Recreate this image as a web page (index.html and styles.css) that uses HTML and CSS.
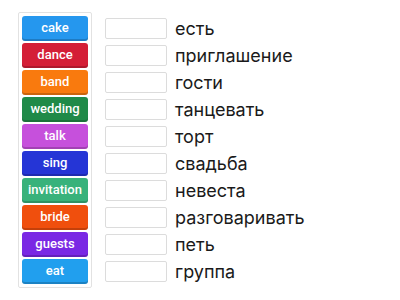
FILE: index.html
```html
<!DOCTYPE html>
<html lang="ru">
<head>
<meta charset="utf-8">
<link rel="stylesheet" href="styles.css">
</head>
<body>
<div class="game">
  <div class="bank">
    <div class="tile t-blue">cake</div>
    <div class="tile t-red">dance</div>
    <div class="tile t-orange">band</div>
    <div class="tile t-green">wedding</div>
    <div class="tile t-pink">talk</div>
    <div class="tile t-navy">sing</div>
    <div class="tile t-teal">invitation</div>
    <div class="tile t-redorange">bride</div>
    <div class="tile t-violet">guests</div>
    <div class="tile t-sky">eat</div>
  </div>
  <div class="rows">
    <div class="row"><span class="slot"></span><span class="word">есть</span></div>
    <div class="row"><span class="slot"></span><span class="word">приглашение</span></div>
    <div class="row"><span class="slot"></span><span class="word">гости</span></div>
    <div class="row"><span class="slot"></span><span class="word">танцевать</span></div>
    <div class="row"><span class="slot"></span><span class="word">торт</span></div>
    <div class="row"><span class="slot"></span><span class="word">свадьба</span></div>
    <div class="row"><span class="slot"></span><span class="word">невеста</span></div>
    <div class="row"><span class="slot"></span><span class="word">разговаривать</span></div>
    <div class="row"><span class="slot"></span><span class="word">петь</span></div>
    <div class="row"><span class="slot"></span><span class="word">группа</span></div>
  </div>
</div>
</body>
</html>
```
FILE: styles.css
```css
html, body {
  margin: 0;
  padding: 0;
  background: #ffffff;
}
.game {
  display: flex;
  align-items: flex-start;
  padding: 12px 0 0 18px;
  gap: 13px;
}
.bank {
  display: flex;
  flex-direction: column;
  gap: 2px;
  padding: 3px;
  border: 1px solid #e2e2e2;
  border-radius: 2px;
}
.tile {
  width: 66px;
  height: 25px;
  box-sizing: border-box;
  border-radius: 3px;
  color: #ffffff;
  font-family: Roboto, "Open Sans", sans-serif;
  font-size: 13px;
  font-weight: 500;
  line-height: 24px;
  text-align: center;
  box-shadow: inset 0 -2px 0 rgba(0, 0, 0, 0.18);
}
.t-blue { background: #2597ee; }
.t-red { background: #d41e37; }
.t-orange { background: #f97a0e; }
.t-green { background: #208a48; }
.t-pink { background: #c650dc; }
.t-navy { background: #2535d6; }
.t-teal { background: #38b27b; }
.t-redorange { background: #f04f0d; }
.t-violet { background: #7a28e4; }
.t-sky { background: #219fee; }
.rows {
  display: flex;
  flex-direction: column;
  gap: 2px;
  padding-top: 4px;
}
.row {
  display: flex;
  align-items: center;
  height: 25px;
  gap: 8px;
}
.slot {
  width: 62px;
  height: 21px;
  box-sizing: border-box;
  border: 1px solid #dcdcdc;
  border-radius: 2px;
  background: #fff;
}
.word {
  font-family: Inter, "Liberation Sans", sans-serif;
  font-size: 18px;
  color: #1a1a1a;
}
```
